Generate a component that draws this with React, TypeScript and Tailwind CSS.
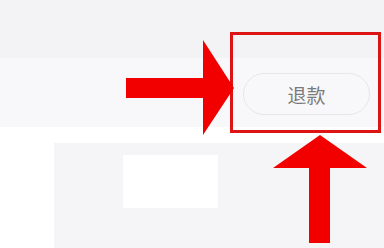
import React from "react";

const Annotations: React.FC = () => (
  <svg
    className="absolute inset-0 pointer-events-none"
    width={384}
    height={248}
    viewBox="0 0 384 248"
  >
    {/* highlight box */}
    <rect x={231.5} y={33.5} width={148} height={98} fill="none" stroke="#dc1414" strokeWidth={3} />
    {/* arrow pointing right */}
    <polygon
      points="126,78 203,78 203,40 234,88 203,135 203,98 126,98"
      fill="#f20000"
    />
    {/* arrow pointing up */}
    <polygon
      points="320,135 367,168 330,168 330,243 309,243 309,168 273,168"
      fill="#f20000"
    />
  </svg>
);

const App: React.FC = () => {
  return (
    <div className="relative w-[384px] h-[248px] overflow-hidden bg-white font-['Noto_Sans_CJK_SC',sans-serif]">
      <div className="h-[58px] bg-[#f3f3f5]" />

      <div className="h-[69px] bg-[#f8f8fa] flex items-start justify-end pt-[15px] pr-[14px]">
        <button className="w-[127px] h-[42px] rounded-full border border-[#e7e7ea] text-[19px] leading-none text-[#7a7a7a]">
          退款
        </button>
      </div>

      <div className="pt-[16px] pl-[54px]">
        <div className="h-[105px] bg-[#f5f5f7] pt-[12px] pl-[69px]">
          <div className="w-[95px] h-[53px] bg-white" />
        </div>
      </div>

      <Annotations />
    </div>
  );
};

export default App;
